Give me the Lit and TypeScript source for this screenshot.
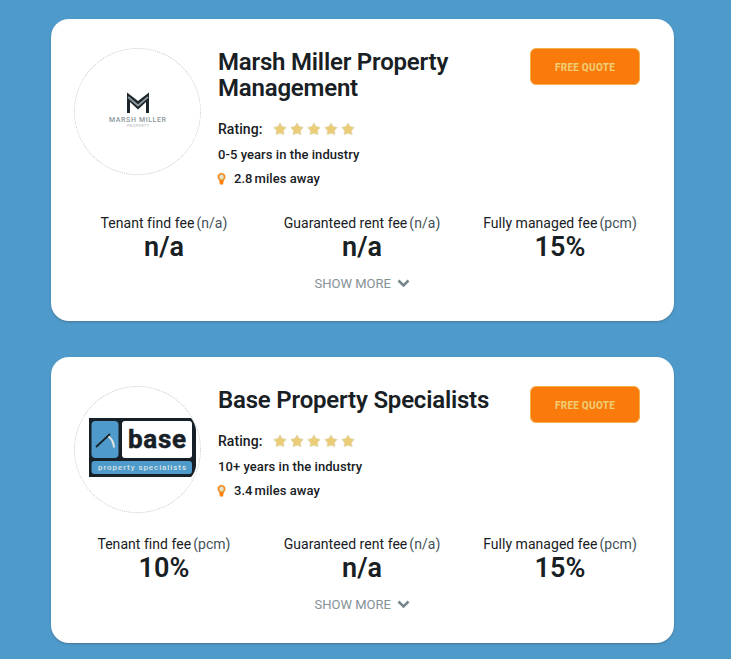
import { LitElement, html, css, svg } from "lit";
import { customElement, property } from "lit/decorators.js";

interface Fee { label: string; unit: string; value: string; }
interface Agent {
  name: string; experience: string; miles: string; logo: string; fees: Fee[];
}

const AGENTS: Agent[] = [
  {
    name: "Marsh Miller Property Management",
    experience: "0-5 years in the industry",
    miles: "2.8",
    logo: "marsh",
    fees: [
      { label: "Tenant find fee", unit: "(n/a)", value: "n/a" },
      { label: "Guaranteed rent fee", unit: "(n/a)", value: "n/a" },
      { label: "Fully managed fee", unit: "(pcm)", value: "15%" },
    ],
  },
  {
    name: "Base Property Specialists",
    experience: "10+ years in the industry",
    miles: "3.4",
    logo: "base",
    fees: [
      { label: "Tenant find fee", unit: "(pcm)", value: "10%" },
      { label: "Guaranteed rent fee", unit: "(n/a)", value: "n/a" },
      { label: "Fully managed fee", unit: "(pcm)", value: "15%" },
    ],
  },
];

const marshLogo = html`<svg width="126" height="126" viewBox="0 0 126 126">
  <path d="M53 44.500 L64 53 L75 44.500 V65 H72 V54 L64 61.500 L56 54 V65 H53Z" fill="#1c2529"/>
  <path d="M54 49 L64 57.500 L74 49" fill="none" stroke="#8d999f" stroke-width="1.800"/>
  <text x="35" y="74" font-size="7" font-weight="500" textLength="57" lengthAdjust="spacing" fill="#8b989b">MARSH MILLER</text>
  <text x="53" y="78.500" font-size="4" textLength="22" fill="#b3bab9">PROPERTY</text>
</svg>`;

const baseLogo = html`<svg width="126" height="126" viewBox="0 0 126 126">
  <path d="M15 32 H117 Q121 37 122 44 V80 Q121 87 117 91 H15Z" fill="#172026"/>
  <rect x="17.500" y="35" width="27" height="37" rx="4" fill="#4e9aca"/>
  <rect x="48" y="35" width="70" height="37" rx="3" fill="#fff"/>
  <rect x="17.500" y="75" width="100.500" height="13" rx="3" fill="#4e9aca"/>
  <path d="M22 61 L36 48" stroke="#172026" stroke-width="1.800" fill="none"/>
  <path d="M34.500 50.500 Q39.500 54 40 61.500" stroke="#e5e5e0" stroke-width="2" fill="none"/>
  <text x="54" y="61.500" font-size="26" font-weight="700" textLength="58" fill="#172026" stroke="#172026" stroke-width=".5">base</text>
  <text x="24" y="84" font-size="8" font-weight="500" textLength="88" fill="#d8e2e4">property specialists</text>
</svg>`;

const star = svg`<svg width="14" height="14" viewBox="0 0 14 14"><path d="M7 .8 L9 4.300 L13.300 5.400 L10.600 8.500 L11 12.800 L7 11.300 L3 12.800 L3.400 8.500 L.7 5.400 L5 4.300Z" fill="#ebcd77" stroke="#dcd9c2" stroke-width=".6"/></svg>`;

@customElement("agent-card")
class AgentCard extends LitElement {
  @property({ attribute: false }) agent!: Agent;

  static styles = css`
    :host { display: block; box-sizing: border-box; padding: 29px 23px 0; height: 286px; background: #fff; border-radius: 18px; box-shadow: 0 1px 2px rgba(60, 70, 80, .4); }
    :host(.tall) { height: 302px; }
    .top { display: flex; height: 128px; }
    :host(.tall) .top { height: 145px; }
    .logo { box-sizing: border-box; flex: none; width: 127px; height: 127px; border-radius: 50%; border: 1px dotted #c8cbcc; }
    .logo svg { display: block; margin: -1px; overflow: visible; }
    .details { width: 300px; margin-left: 17px; font-size: 13px; font-weight: 500; line-height: 25px; letter-spacing: .06px; }
    h2 { margin: .5px 0 14.500px; font-size: 24px; line-height: 26.500px; font-weight: 600; letter-spacing: -.2px; }
    .rating { display: flex; align-items: center; height: 26px; line-height: 26px; font-size: 14px; }
    .stars { display: flex; gap: 3px; margin-left: 10.300px; }
    .distance { display: flex; align-items: center; height: 24px; line-height: 24px; }
    .pin { margin: 0 8px 0 -1px; }
    .num { margin-right: 2px; }
    button { box-sizing: border-box; margin: 0 10.500px 0 auto; width: 110px; height: 37px; padding: 1px 0 0; border: 1px solid #f0b04c; border-radius: 6px; background: #fa7a0c; color: #f0cc72; font: 800 10px Roboto, sans-serif; letter-spacing: .25px; }
    .fees { display: flex; margin: 21px 0 0 -9px; text-align: center; }
    .fee { flex: none; width: 198px; }
    .label { font-size: 14px; line-height: 18px; white-space: nowrap; letter-spacing: .04px; }
    .unit { margin-left: 2px; color: #435157; }
    .value { font-size: 27px; line-height: 30px; font-weight: 600; }
    .more { display: flex; justify-content: center; align-items: center; margin-top: 11px; height: 20px; gap: 6px; font-size: 13px; color: #849197; }
  `;

  render() {
    const a = this.agent;
    return html`
      <div class="top">
        <div class="logo">${a.logo === "marsh" ? marshLogo : baseLogo}</div>
        <div class="details">
          <h2>${a.name}</h2>
          <div class="rating">Rating:<span class="stars">${[1, 2, 3, 4, 5].map(() => star)}</span></div>
          <div>${a.experience}</div>
          <div class="distance">
            <svg class="pin" width="9" height="12" viewBox="0 0 9 12"><path d="M4.500 0 C2 0 .5 1.800 .5 4 Q.5 6 2.300 7.400 L2.800 11 Q4.500 12.500 6.200 11 L6.700 7.400 Q8.500 6 8.500 4 C8.500 1.800 7 0 4.500 0Z" fill="#fa830f"/><circle cx="4.500" cy="4" r="2.500" fill="#e9e4cb" stroke="#dcb568" stroke-width="1"/></svg>
            <span class="num">${a.miles}</span><span>miles away</span>
          </div>
        </div>
        <button>FREE QUOTE</button>
      </div>
      <div class="fees">${a.fees.map((f) => html`<div class="fee">
        <div class="label">${f.label}<span class="unit">${f.unit}</span></div>
        <div class="value">${f.value}</div>
      </div>`)}</div>
      <div class="more"><span>SHOW MORE</span><svg width="13" height="9" viewBox="0 0 13 9"><path d="M1.500 1.500 L6.500 6.500 L11.500 1.500" fill="none" stroke="#78868c" stroke-width="2.600"/></svg></div>
    `;
  }
}

@customElement("app-root")
class AppRoot extends LitElement {
  static styles = css`
    :host { display: flex; flex-direction: column; gap: 36px; box-sizing: border-box; width: 731px; height: 659px; padding: 19px 57.500px 0 51px; background: #4e9aca; font-family: Roboto, sans-serif; color: #182024; overflow: hidden; }
  `;
  render() {
    return AGENTS.map((a, i) => html`<agent-card class=${i === 0 ? "tall" : ""} .agent=${a}></agent-card>`);
  }
}
